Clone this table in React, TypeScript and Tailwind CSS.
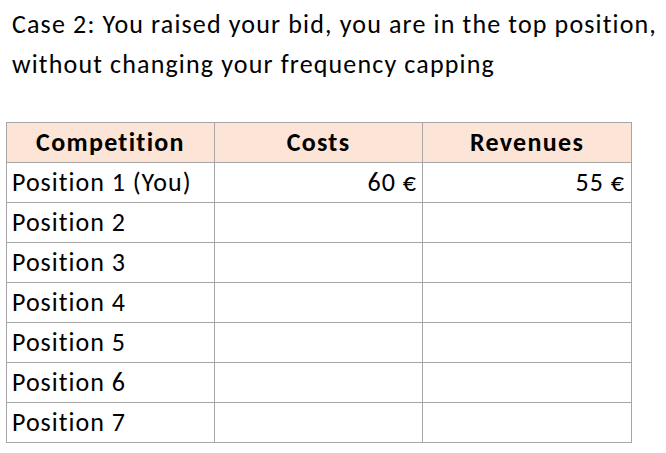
import React from "react";

const rows = [
  ["Position 1 (You)", "60 €", "55 €"],
  ["Position 2", "", ""],
  ["Position 3", "", ""],
  ["Position 4", "", ""],
  ["Position 5", "", ""],
  ["Position 6", "", ""],
  ["Position 7", "", ""],
];

export default function App() {
  return (
    <div
      className="w-[666px] h-[453px] bg-white text-black overflow-hidden"
      style={{ fontFamily: "Carlito, Lato, 'Liberation Sans', sans-serif" }}
    >
      <div className="pl-[12px] pt-[4px] text-[26px] leading-[40px] tracking-[1.15px]">
        <div className="whitespace-nowrap">Case 2: You raised your bid, you are in the top position,</div>
        <div className="whitespace-nowrap">without changing your frequency capping</div>
      </div>
      <table className="ml-[6px] mt-[38px] border-collapse table-fixed w-[625px] text-[26px] tracking-[1px]">
        <colgroup>
          <col className="w-[208px]" />
          <col className="w-[208px]" />
          <col className="w-[209px]" />
        </colgroup>
        <thead>
          <tr className="h-[40px] bg-[#fce4d6]">
            <th className="border border-[#a6a6a6] font-bold text-center p-0 tracking-[1.3px]">Competition</th>
            <th className="border border-[#a6a6a6] font-bold text-center p-0 tracking-[1.3px]">Costs</th>
            <th className="border border-[#a6a6a6] font-bold text-center p-0 tracking-[1.3px]">Revenues</th>
          </tr>
        </thead>
        <tbody>
          {rows.map((r) => (
            <tr key={r[0]} className="h-[40px]">
              <td className="border border-[#a6a6a6] pl-[5px] py-0 text-left whitespace-nowrap">{r[0]}</td>
              <td className="border border-[#a6a6a6] pr-[5px] py-0 text-right">{r[1]}</td>
              <td className="border border-[#a6a6a6] pr-[6px] py-0 text-right">{r[2]}</td>
            </tr>
          ))}
        </tbody>
      </table>
    </div>
  );
}
